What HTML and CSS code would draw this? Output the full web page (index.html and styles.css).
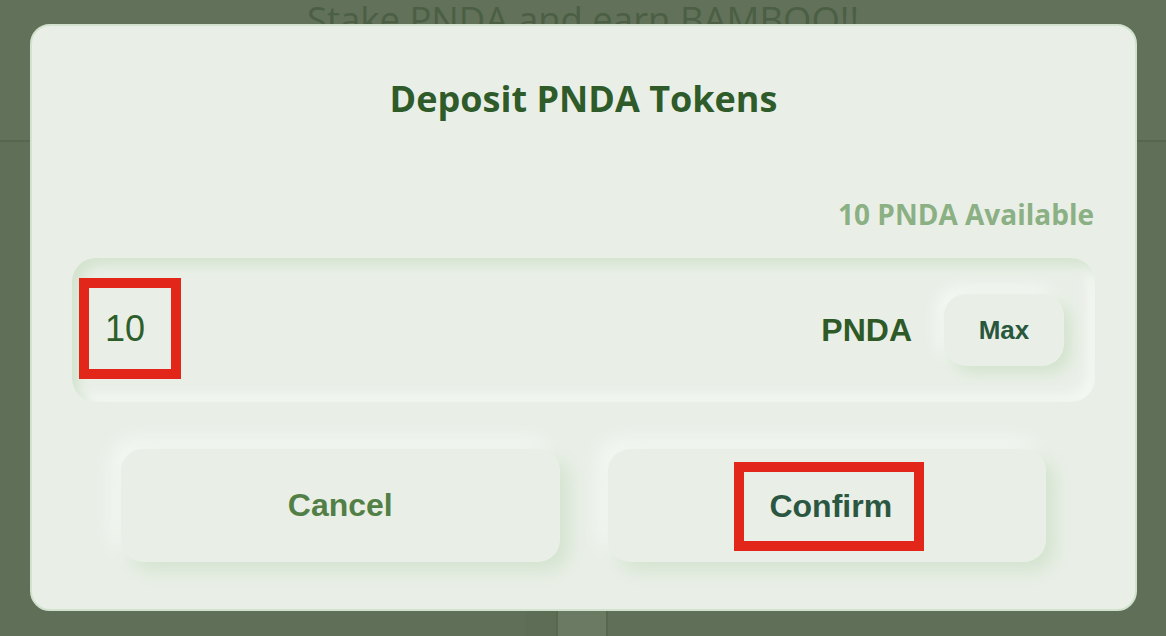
FILE: index.html
```html
<!DOCTYPE html>
<html lang="en">
<head>
<meta charset="utf-8">
<title>Deposit PNDA Tokens</title>
<link rel="stylesheet" href="styles.css">
</head>
<body>
<div class="page">
  <h1 class="page-title">Stake PNDA and earn BAMBOO!!</h1>
  <div class="panel">
    <div class="panel-body"></div>
    <div class="panel-strip">
      <div class="strip-a"></div>
      <div class="strip-b"></div>
      <div class="strip-c"></div>
      <div class="strip-d"></div>
    </div>
  </div>
</div>

<div class="modal">
  <h2 class="modal-title">Deposit PNDA Tokens</h2>
  <div class="available">10 PNDA Available</div>
  <div class="amount-field">
    <span class="amount-value">10</span>
    <span class="amount-spacer"></span>
    <span class="amount-unit">PNDA</span>
    <button class="max-btn">Max</button>
  </div>
  <div class="actions">
    <button class="action-btn cancel">Cancel</button>
    <button class="action-btn confirm"><span class="confirm-label">Confirm</span></button>
  </div>
</div>
</body>
</html>
```
FILE: styles.css
```css
html, body {
  margin: 0;
  padding: 0;
  height: 100%;
}
body {
  background: #627159;
  font-family: "Open Sans", "Liberation Sans", sans-serif;
  overflow: hidden;
}
.page {
  height: 100%;
  display: flex;
  flex-direction: column;
}
.page-title {
  margin: 0;
  font-family: "Open Sans", sans-serif;
  font-weight: 400;
  font-size: 36.5px;
  line-height: 38px;
  color: #4b5f44;
  text-align: center;
  height: 140px;
}
.panel {
  flex: 1;
  border-top: 2px solid #56664f;
  background: #606f58;
  display: flex;
  flex-direction: column;
}
.panel-body {
  flex: 1;
}
.panel-strip {
  height: 30px;
  display: grid;
  grid-template-columns: 525px 33px 50px 1fr;
}
.strip-b {
  background: #5d6d56;
  border-right: 2px solid #58684f;
}
.strip-c {
  background: #6a7a63;
  border-right: 2px solid #58684f;
}

.modal {
  position: fixed;
  left: 30px;
  top: 24px;
  width: 1107px;
  height: 587px;
  box-sizing: border-box;
  background: #e9efe7;
  border: 2px solid #d3e2ce;
  border-radius: 20px;
  padding: 53px 40px 0;
}
.modal-title {
  margin: 0;
  font-family: "Open Sans", sans-serif;
  font-weight: 700;
  font-size: 36px;
  line-height: 40px;
  color: #2f5b2a;
  text-align: center;
}
.available {
  margin-top: 79px;
  font-family: "Open Sans", sans-serif;
  font-weight: 700;
  font-size: 28px;
  line-height: 32px;
  color: #8bb084;
  text-align: right;
  padding-right: 1px;
}
.amount-field {
  margin-top: 28px;
  height: 144px;
  box-sizing: border-box;
  border-radius: 24px;
  background: #e9efe7;
  box-shadow: inset 7px 7px 12px #d4e3cf, inset -7px -7px 12px #f4f8f3;
  display: flex;
  align-items: center;
  padding: 0 31px 0 7px;
}
.amount-value {
  width: 102px;
  height: 101px;
  box-sizing: border-box;
  border: 10px solid #e2261a;
  padding-left: 16px;
  font-family: "Liberation Sans", Arial, sans-serif;
  font-size: 36px;
  line-height: 81px;
  color: #2e5e2a;
  margin-top: -3px;
}
.amount-spacer {
  flex: 1;
}
.amount-unit {
  font-family: "Liberation Sans", Arial, sans-serif;
  font-weight: 700;
  font-size: 32px;
  color: #2e5a27;
  margin-right: 32px;
}
.max-btn {
  width: 120px;
  height: 72px;
  border: none;
  border-radius: 22px;
  background: #e9efe7;
  box-shadow: 7px 7px 14px #d3e3ce, -7px -7px 14px #f4f8f3;
  font-family: "Liberation Sans", Arial, sans-serif;
  font-weight: 700;
  font-size: 26px;
  color: #28573d;
  padding: 0;
}
.actions {
  margin-top: 47px;
  display: flex;
  gap: 48px;
  padding: 0 49px;
}
.action-btn {
  flex: 1;
  height: 113px;
  border: none;
  border-radius: 22px;
  background: #e9efe7;
  box-shadow: 9px 9px 18px #d4e3cf, -9px -9px 18px #f4f8f3;
  font-family: "Liberation Sans", Arial, sans-serif;
  font-weight: 700;
  font-size: 32px;
  padding: 0;
  display: flex;
  align-items: center;
  justify-content: center;
}
.cancel {
  color: #527f46;
}
.confirm {
  color: #2b5742;
}
.confirm-label {
  display: inline-block;
  border: 10px solid #e2261a;
  padding: 0 22px 0 25px;
  line-height: 69px;
  margin-top: 1px;
  margin-left: 5px;
}
```
